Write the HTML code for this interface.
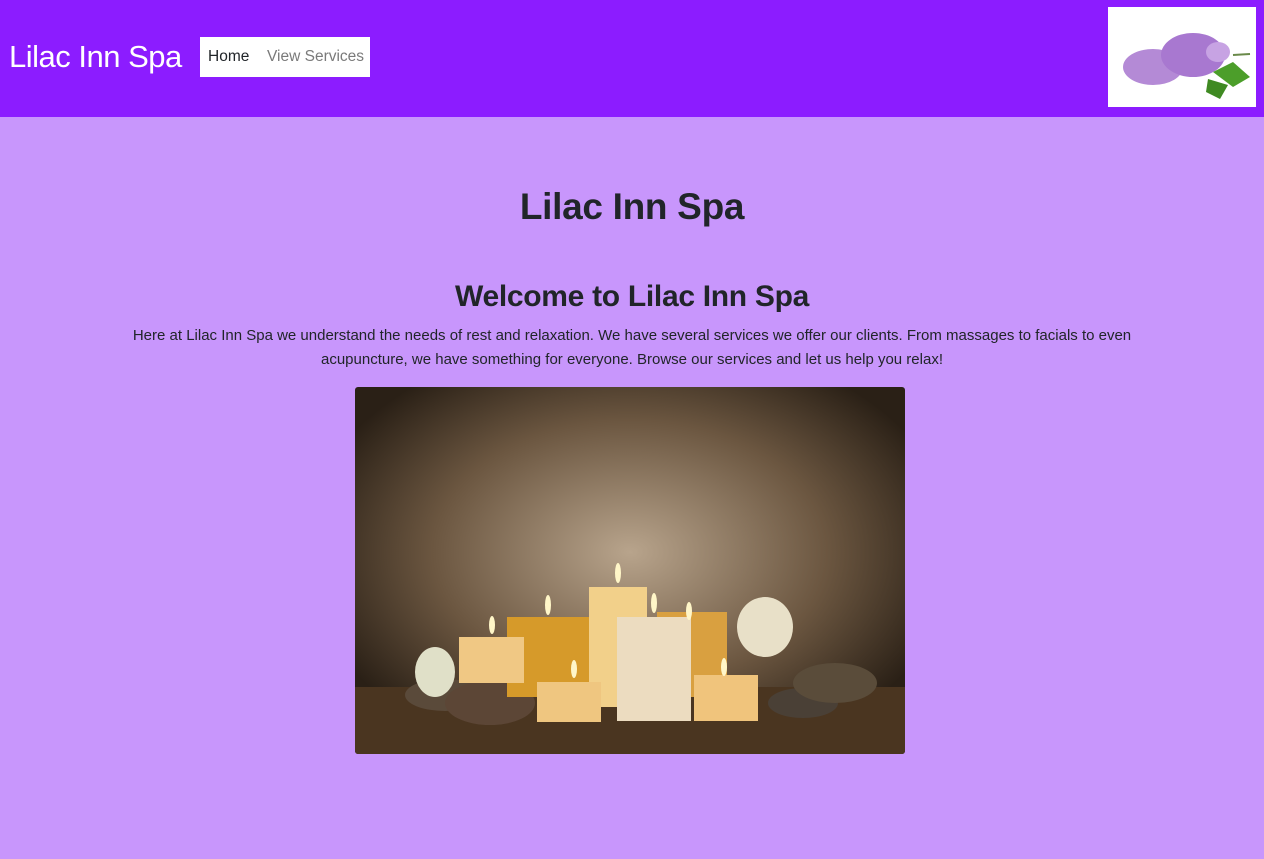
<!DOCTYPE html>
<html><head><meta charset="utf-8"><style>
*{margin:0;padding:0;box-sizing:border-box}
body{width:1264px;height:859px;background:#c896fc;font-family:"Liberation Sans",sans-serif;color:#212529;overflow:hidden}
.nav{height:117px;background:#8c1cff;position:relative}
.brand{position:absolute;left:9px;top:39px;font-size:31px;color:#fff;letter-spacing:-0.5px}
.menu{position:absolute;left:200px;top:37px;width:170px;height:40px;background:#fff;font-size:15.5px;line-height:40px}
.menu span{position:absolute}
.logo{position:absolute;left:1108px;top:7px;width:148px;height:100px;background:#fff}
h1{position:absolute;top:186px;width:100%;text-align:center;font-size:37px;font-weight:bold;letter-spacing:-0.3px}
h2{position:absolute;top:280px;width:100%;text-align:center;font-size:30px;font-weight:bold;letter-spacing:-0.3px}
p{position:absolute;top:324px;left:100px;width:1064px;text-align:center;font-size:15px;line-height:24px}
.img{position:absolute;left:355px;top:387px;width:550px;height:367px;border-radius:3px;overflow:hidden}
</style></head><body>
<div class="nav">
<div class="brand">Lilac Inn Spa</div>
<div class="menu"><span style="left:8px;color:#212529">Home</span><span style="left:67px;color:#7a7a7a">View Services</span></div>
<div class="logo"><svg width="148" height="100">
<ellipse cx="45" cy="60" rx="30" ry="18" fill="#b48ad6"/><ellipse cx="85" cy="48" rx="32" ry="22" fill="#a878d0"/><ellipse cx="110" cy="45" rx="12" ry="10" fill="#c7a3e3"/>
<path d="M105 65 L125 55 L142 70 L125 80Z" fill="#4c9e2a"/><path d="M100 72 L120 78 L112 92 L98 85Z" fill="#3f8a22"/><path d="M125 48 L142 47" stroke="#6a8a4a" stroke-width="2"/>
</svg></div>
</div>
<h1>Lilac Inn Spa</h1>
<h2>Welcome to Lilac Inn Spa</h2>
<p>Here at Lilac Inn Spa we understand the needs of rest and relaxation. We have several services we offer our clients. From massages to facials to even acupuncture, we have something for everyone. Browse our services and let us help you relax!</p>
<div class="img"><svg width="550" height="367">
<defs><radialGradient id="g" cx="0.5" cy="0.45" r="0.6"><stop offset="0" stop-color="#b8a48c"/><stop offset="0.6" stop-color="#6b5640"/><stop offset="1" stop-color="#2a2016"/></radialGradient></defs>
<rect width="550" height="367" fill="url(#g)"/>
<rect y="300" width="550" height="67" fill="#4a3520"/>
<ellipse cx="90" cy="308" rx="40" ry="16" fill="#5a4a3a"/><ellipse cx="135" cy="316" rx="45" ry="22" fill="#5c4636"/>
<ellipse cx="448" cy="316" rx="35" ry="15" fill="#4a4036"/><ellipse cx="480" cy="296" rx="42" ry="20" fill="#5a4c3a"/>
<rect x="152" y="230" width="82" height="80" fill="#d69a2a"/>
<rect x="302" y="225" width="70" height="85" fill="#d9a040"/>
<rect x="234" y="200" width="58" height="120" fill="#f2d08a"/>
<rect x="262" y="230" width="74" height="104" fill="#ecdcc0"/>
<rect x="104" y="250" width="65" height="46" fill="#f0c884"/>
<rect x="182" y="295" width="64" height="40" fill="#efc680"/>
<rect x="339" y="288" width="64" height="46" fill="#f0c47c"/>
<ellipse cx="410" cy="240" rx="28" ry="30" fill="#e8e0c8"/><ellipse cx="80" cy="285" rx="20" ry="25" fill="#e0e0c8"/>
<g fill="#fff6c8"><ellipse cx="137" cy="238" rx="3" ry="9"/><ellipse cx="193" cy="218" rx="3" ry="10"/><ellipse cx="263" cy="186" rx="3" ry="10"/><ellipse cx="299" cy="216" rx="3" ry="10"/><ellipse cx="334" cy="224" rx="3" ry="9"/><ellipse cx="219" cy="282" rx="3" ry="9"/><ellipse cx="369" cy="280" rx="3" ry="9"/></g>
</svg></div>
</body></html>
